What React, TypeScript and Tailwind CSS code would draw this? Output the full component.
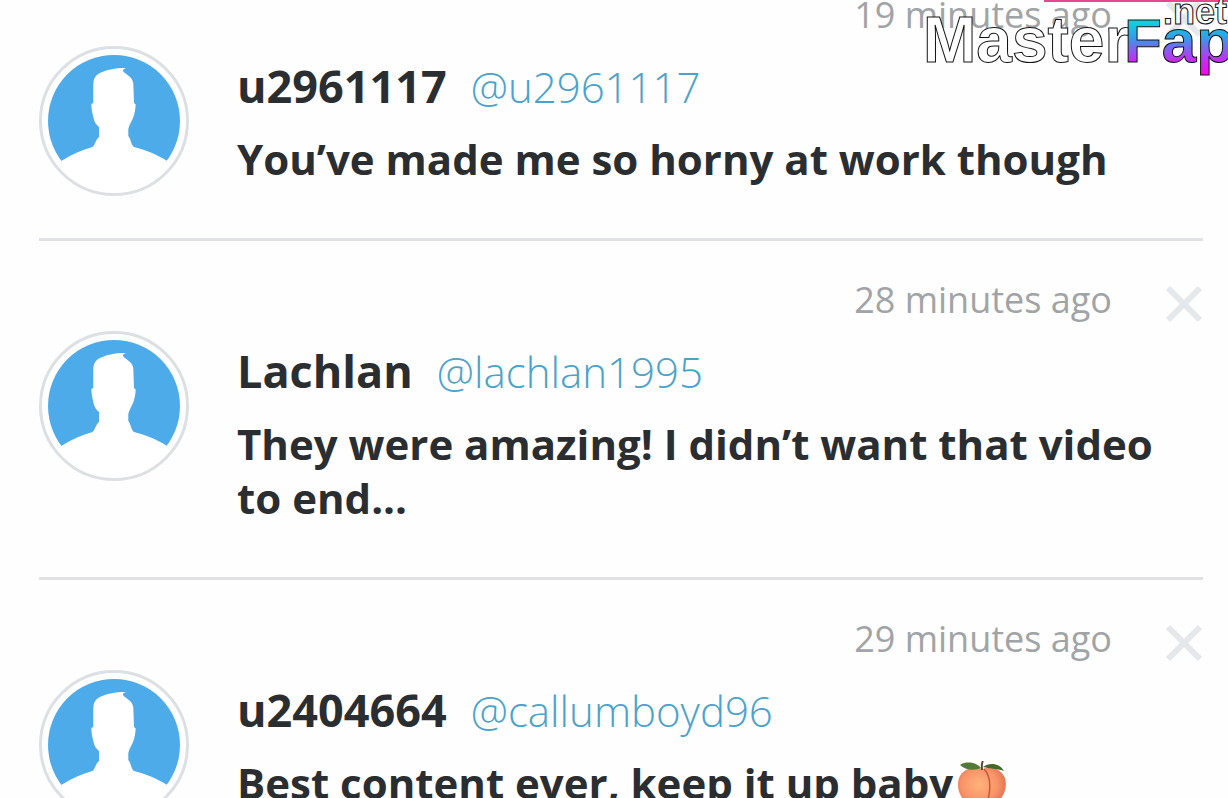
import React, { FC } from "react";


export interface IComment {
    id: number;
    name: string;
    handle: string;
    time: string;
    text: string;
    peach?: boolean;
}

export interface IProps {
    comment: IComment;
}


const comments: IComment[] = [
    { id: 1, name: "u2961117", handle: "@u2961117", time: "19 minutes ago", text: "You’ve made me so horny at work though" },
    { id: 2, name: "Lachlan", handle: "@lachlan1995", time: "28 minutes ago", text: "They were amazing! I didn’t want that video to end..." },
    { id: 3, name: "u2404664", handle: "@callumboyd96", time: "29 minutes ago", text: "Best content ever, keep it up baby", peach: true },
];


const Avatar: FC = () => {
    return (
        <svg viewBox="0 0 150 150" className="size-[150px] shrink-0" aria-hidden="true">
            <circle cx="75" cy="75" r="74" fill="#fff" />
            <circle cx="75" cy="75" r="66" fill="#4eabea" />
            <path
                d="M14 119 L22.7 114.7 C33 108 43 104 53.5 101 C56 99 57 93 60 91 L60 81 C57 79 55.5 76 54.5 72 C53.5 67 52.5 64 52.3 58 L54.3 57 L54.3 38 C54.6 32 57 29 61 27 C67 24 75 22 87 22 C84.5 23 83.5 24 84 25 C87 29 93 30 94.3 37 L95 57 L96.7 58.5 C96.5 64 95.5 68 94 72 C92.5 76 90 79 89.3 83 L89.3 90 C92 93 92 99 95 101 C107 104 117 108 127.7 114.7 L136 119 L118 140 L75 146 L32 140 Z"
                fill="#fff"
            />
            <circle cx="75" cy="75" r="73.5" fill="none" stroke="#dcdfe3" strokeWidth="3" />
        </svg>
    );
};


const Peach: FC = () => {
    return (
        <svg viewBox="0 0 50 50" className="ml-1 inline-block size-[50px] align-[-12px]" role="img" aria-label="peach">
            <defs>
                <radialGradient id="peachSkin" cx="0.45" cy="0.4" r="0.62">
                    <stop offset="0" stopColor="#ffb27c" />
                    <stop offset="0.6" stopColor="#f89468" />
                    <stop offset="1" stopColor="#e0694b" />
                </radialGradient>
            </defs>
            <path
                d="M26 8 C34 4 44 8 48 17 C52 31 42 45 26 49 C10 46 0 35 1 22 C2 9 14 4 26 8 Z"
                fill="url(#peachSkin)"
            />
            <path d="M27 8 C33 14 34 26 31 39" fill="none" stroke="#c8573b" strokeWidth="1.5" />
            <path d="M24 7 C19 1 9 0 3 4 C8 9 17 10 24 7 Z" fill="#547a35" />
            <path d="M26 6 C32 1 43 2 47 10 C39 7 33 8 26 6 Z" fill="#45672d" />
            <path d="M25 9 C25 6 24 3 26 0" fill="none" stroke="#5c4a35" strokeWidth="2" />
        </svg>
    );
};


const Comment: FC<IProps> = (props: IProps) => {
    return (
        <li className="border-b-[3px] border-[#dfe1e4] pt-[35px] pb-[42px]">
            <div className="flex h-12 items-center justify-end gap-[53px]">
                <time className="text-4xl text-[#a0a4a6]">{props.comment.time}</time>
                <button type="button" aria-label="Delete comment" className="mt-2">
                    <svg viewBox="0 0 38 38" className="size-[38px]" stroke="#e4e8eb" strokeWidth="6" aria-hidden="true">
                        <path d="M3 3 L35 35 M35 3 L3 35" />
                    </svg>
                </button>
            </div>
            <div className="flex items-start gap-12 pt-[7px]">
                <Avatar />
                <div className="min-w-0 flex-1 pt-[13px]">
                    <div className="flex items-baseline gap-6 leading-[54px]">
                        <h2 className="text-[45px] font-bold">{props.comment.name}</h2>
                        <a href="#profile" className="text-[42px] font-light text-[#4aa3cb]">{props.comment.handle}</a>
                    </div>
                    <p className="pt-[18px] pb-[10px] text-[42px] leading-[54px] font-bold">
                        {props.comment.text}
                        {props.comment.peach ? <Peach /> : null}
                    </p>
                </div>
            </div>
        </li>
    );
};


const Logo: FC = () => {
    return (
        <svg
            viewBox="0 0 308 82"
            className="absolute top-0 right-0 h-[82px] w-[308px] font-['Liberation_Sans',sans-serif] font-bold"
            stroke="#111"
            role="img"
            aria-label="MasterFap.net"
        >
            <defs>
                <linearGradient id="logoFill" gradientUnits="userSpaceOnUse" x1="0" y1="16" x2="0" y2="76">
                    <stop offset="0" stopColor="#00e5d8" />
                    <stop offset="0.35" stopColor="#30a0ea" />
                    <stop offset="0.7" stopColor="#b936f5" />
                    <stop offset="1" stopColor="#ff00f0" />
                </linearGradient>
            </defs>
            <text x="3" y="62" fontSize="64" fill="#fff">Master</text>
            <text x="204" y="62" fontSize="62" fill="url(#logoFill)">Fap</text>
            <text x="243" y="24" fontSize="36" fill="#fff">.net</text>
        </svg>
    );
};


export default function App() {
    return (
        <main className="relative h-screen overflow-hidden bg-[#fefefe] font-['Open_Sans',sans-serif] text-[#2b2e31]">
            <ul className="-mt-11 pr-[25px] pl-[39px]">
                {comments.map((comment) => (
                    <Comment key={comment.id} comment={comment} />
                ))}
            </ul>
            <div className="absolute top-0 right-0 h-[2px] w-[184px] bg-[#e5488b]"></div>
            <Logo />
        </main>
    );
}
